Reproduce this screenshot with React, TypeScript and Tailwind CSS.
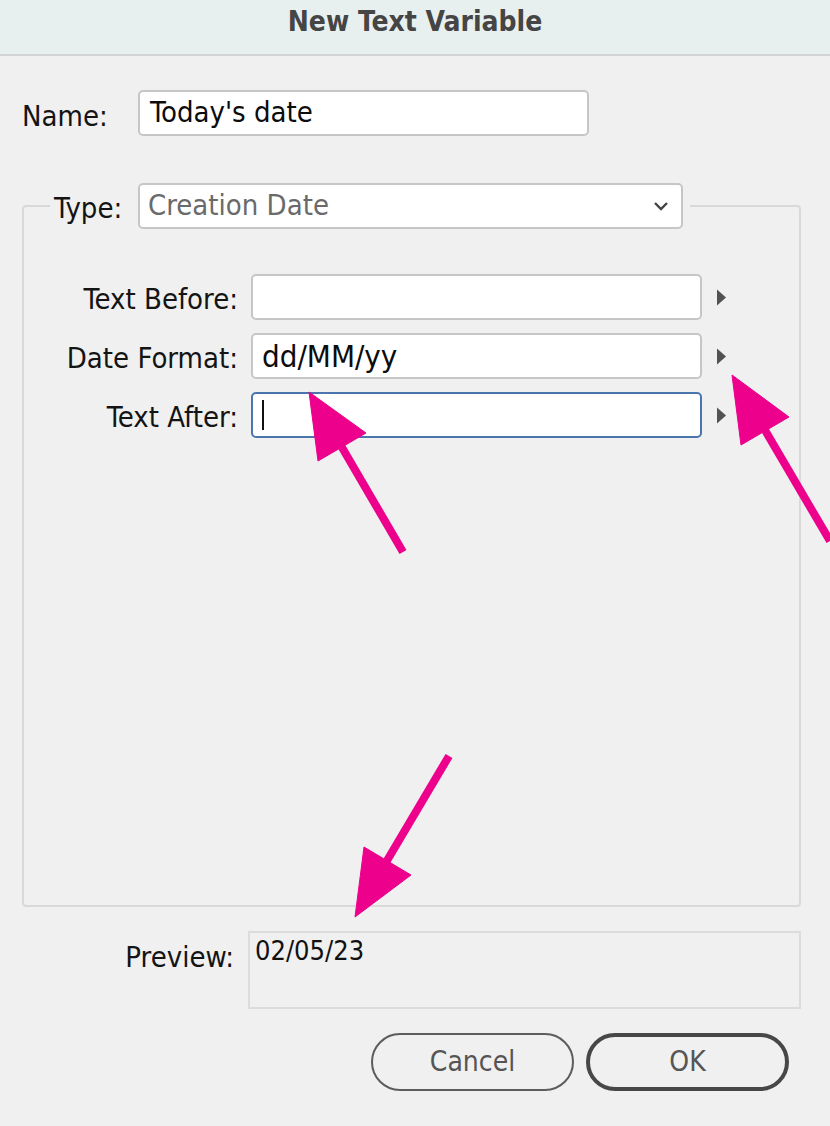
const ui = "font-['DejaVu_Sans_Condensed','DejaVu_Sans',sans-serif]"

function Triangle() {
  return (
    <svg width="11" height="17" viewBox="0 0 11 17" className="shrink-0">
      <path d="M1 0.5 L10 8.5 L1 16.5 Z" fill="#525252" />
    </svg>
  )
}

function Field({ label, value, focused, big }: { label: string; value?: string; focused?: boolean; big?: boolean }) {
  return (
    <div className="flex h-[46px] items-center">
      <span className="w-[214px] whitespace-nowrap pt-[4px] text-right text-[29px] leading-none text-[#141414]">
        {label}
      </span>
      <div
        className={`ml-[13px] flex h-[46px] w-[451px] items-center rounded-[5px] bg-white px-[9px] text-[#0c0c0c] ${
          big ? 'text-[31px]' : 'text-[29px]'
        } ${focused ? 'border-2 border-[#4a76ad]' : 'border-2 border-[#c6c6c6]'}`}
      >
        {value}
        {focused && <span className="h-[30px] w-[2px] bg-[#111]" />}
      </div>
      <span className="ml-[14px]">
        <Triangle />
      </span>
    </div>
  )
}

export default function App() {
  return (
    <div className={`relative h-[1126px] w-[830px] overflow-hidden bg-[#f0f0f0] ${ui}`}>
      {/* Title bar */}
      <div className="flex h-[56px] justify-center border-b-2 border-[#d2d4d4] bg-[#e8f0ef] pt-[2px]">
        <span className="text-[28px] font-bold leading-[40px] text-[#454545]">New Text Variable</span>
      </div>

      {/* Name */}
      <div className="mt-[34px] flex items-center pl-[22px]">
        <span className="w-[116px] pt-[6px] text-[29px] leading-none text-[#141414]">Name:</span>
        <div className="flex h-[46px] w-[451px] items-center rounded-[5px] border-2 border-[#c6c6c6] bg-white px-[10px] text-[29px] text-[#0c0c0c]">
          Today's date
        </div>
      </div>

      {/* Type group */}
      <fieldset className="mx-[22px] mt-[47px] h-[724px] w-[779px] rounded-[4px] border-2 border-[#d9d9d9]">
        <legend className="ml-[26px] flex items-center pl-[4px] pr-[7px]">
          <span className="w-[70px] whitespace-nowrap pt-[4px] text-[29px] leading-none text-[#141414]">Type:</span>
          <div className="ml-[14px] flex h-[46px] w-[545px] items-center justify-between rounded-[5px] border-2 border-[#c6c6c6] bg-white pl-[8px] pr-[12px] text-[29px] text-[#6a6a6a]">
            Creation Date
            <svg width="16" height="10" viewBox="0 0 16 10">
              <path d="M2 2 L8 8 L14 2" fill="none" stroke="#444" strokeWidth="2.4" />
            </svg>
          </div>
        </legend>
        <div className="mt-[45px] flex flex-col gap-[13px]">
          <Field label="Text Before:" />
          <Field label="Date Format:" value="dd/MM/yy" big />
          <Field label="Text After:" focused />
        </div>
      </fieldset>

      {/* Preview */}
      <div className="mt-[24px] flex items-start">
        <span className="mt-[12px] w-[234px] whitespace-nowrap text-right text-[29px] leading-none text-[#141414]">
          Preview:
        </span>
        <div className="ml-[14px] h-[78px] w-[553px] border-2 border-[#dcdcdc] px-[5px] pt-[2px] text-[27px] leading-[32px] text-[#111]">
          02/05/23
        </div>
      </div>

      {/* Buttons */}
      <div className="mt-[24px] flex justify-end gap-[12px] pr-[41px]">
        <button className="h-[58px] w-[203px] rounded-full border-2 border-[#5c5c5c] text-[28px] text-[#555]">
          Cancel
        </button>
        <button className="h-[58px] w-[203px] rounded-full border-[4px] border-[#474747] text-[28px] text-[#555]">
          OK
        </button>
      </div>

      {/* Annotation arrows */}
      <svg className="pointer-events-none absolute inset-0" width="830" height="1126" viewBox="0 0 830 1126">
        <g fill="#ec008c" stroke="#ec008c">
          <line x1="340" y1="444" x2="403" y2="552" strokeWidth="8" />
          <polygon points="309,392 366,433 318,461" strokeWidth="1" />
          <line x1="762" y1="425" x2="830" y2="541" strokeWidth="8" />
          <polygon points="732,375 789,417 741,445" strokeWidth="1" />
          <line x1="449" y1="756" x2="385" y2="864" strokeWidth="8" />
          <polygon points="355,917 364,847 411,875" strokeWidth="1" />
        </g>
      </svg>
    </div>
  )
}
